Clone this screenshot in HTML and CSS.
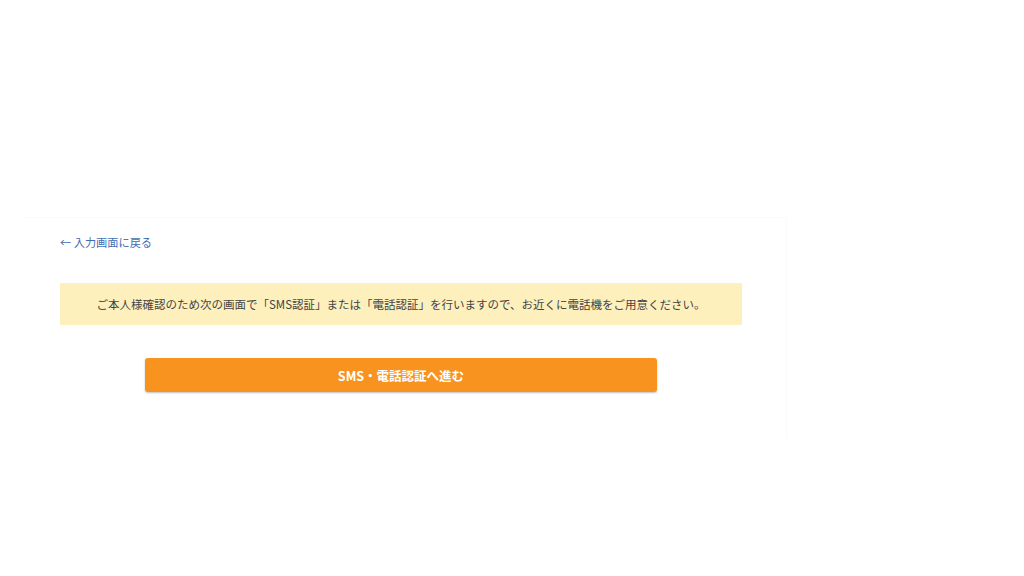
FILE: index.html
```html
<!DOCTYPE html>
<html lang="ja">
<head>
<meta charset="utf-8">
<title>SMS・電話認証</title>
<link rel="stylesheet" href="styles.css">
</head>
<body>
<div class="page">
  <div class="panel">
    <a class="back" href="#">← 入力画面に戻る</a>
    <div class="notice">ご本人様確認のため次の画面で「SMS認証」または「電話認証」を行いますので、お近くに電話機をご用意ください。</div>
    <div class="actions">
      <button class="btn" type="button">SMS・電話認証へ進む</button>
    </div>
  </div>
</div>
</body>
</html>
```
FILE: styles.css
```css
html, body {
  margin: 0;
  padding: 0;
  background: #ffffff;
}
body {
  font-family: "Noto Sans CJK JP", "Noto Sans", sans-serif;
  width: 1024px;
  height: 576px;
  overflow: hidden;
}
.page {
  padding: 217px 0 0 22px;
}
.panel {
  box-sizing: border-box;
  width: 765px;
  height: 221px;
  border-top: 1px solid #fafafa;
  border-right: 1px solid #fafafa;
  padding: 16px 44px 0 38px;
}
.back {
  display: block;
  font-size: 11.2px;
  line-height: 17px;
  color: #3f6fb0;
  text-decoration: none;
}
.notice {
  margin-top: 32px;
  height: 42px;
  background: #fdf0bd;
  color: #444444;
  font-size: 11.5px;
  display: flex;
  align-items: center;
  justify-content: center;
}
.actions {
  margin-top: 33px;
  display: flex;
  justify-content: center;
}
.btn {
  width: 512px;
  height: 34px;
  border: 0;
  border-radius: 3px;
  background: #f7931e;
  color: #ffffff;
  font-family: "Noto Sans CJK JP", "Noto Sans", sans-serif;
  font-size: 12.5px;
  font-weight: 700;
  box-shadow: 0 1px 2px rgba(0,0,0,0.25);
  padding: 0;
}
```
